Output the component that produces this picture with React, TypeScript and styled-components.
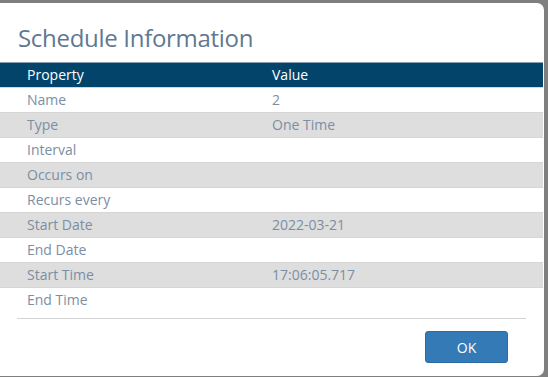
import React from 'react';
import styled, { createGlobalStyle } from 'styled-components';

const GlobalStyle = createGlobalStyle`
  html, body {
    margin: 0;
    padding: 0;
    background: #808080;
    font-family: 'Open Sans', 'Liberation Sans', sans-serif;
  }
`;

const Backdrop = styled.div`
  width: 548px;
  height: 377px;
  background: #7f7f7f;
  padding-top: 3px;
  box-sizing: border-box;
  overflow: hidden;
`;

const Modal = styled.div`
  width: 544px;
  height: 373px;
  background: #fff;
  border-radius: 0 7px 7px 0;
  display: flex;
  flex-direction: column;
`;

const Title = styled.h1`
  margin: 0;
  padding: 18px 0 0 18px;
  height: 59px;
  box-sizing: border-box;
  font-size: 24px;
  font-weight: 400;
  color: #5f7893;
  letter-spacing: -0.3px;
`;

const Table = styled.div`
  display: flex;
  flex-direction: column;
`;

const Row = styled.div<{ $shade?: boolean; $head?: boolean }>`
  display: grid;
  grid-template-columns: 245px 1fr;
  height: 25px;
  box-sizing: border-box;
  align-items: center;
  font-size: 14px;
  padding-left: 27px;
  color: ${(p) => (p.$head ? '#ffffff' : '#7b8ea4')};
  background: ${(p) => (p.$head ? '#03446a' : p.$shade ? '#dedede' : '#ffffff')};
  border-top: 1px solid ${(p) => (p.$head ? '#8aa3b6' : '#d6d6d6')};
  margin-right: 1px;
`;

const Cell = styled.span`
  white-space: nowrap;
  line-height: 22px;
`;

const Footer = styled.div`
  margin: 6px 18px 0 17px;
  border-top: 1px solid #d3d3d3;
  display: flex;
  justify-content: flex-end;
  padding: 12px 18px 0 0;
`;

const OkButton = styled.button`
  width: 83px;
  height: 32px;
  background: #337ab7;
  border: 1px solid #2e6da4;
  border-radius: 3px;
  color: #fff;
  font-family: 'Open Sans', 'Liberation Sans', sans-serif;
  font-size: 14px;
`;

const rows: [string, string][] = [
  ['Name', '2'],
  ['Type', 'One Time'],
  ['Interval', ''],
  ['Occurs on', ''],
  ['Recurs every', ''],
  ['Start Date', '2022-03-21'],
  ['End Date', ''],
  ['Start Time', '17:06:05.717'],
  ['End Time', ''],
];

export default function App() {
  return (
    <>
      <GlobalStyle />
      <Backdrop>
        <Modal>
          <Title>Schedule Information</Title>
          <Table>
            <Row $head>
              <Cell>Property</Cell>
              <Cell>Value</Cell>
            </Row>
            {rows.map(([k, v], i) => (
              <Row key={k} $shade={i % 2 === 1}>
                <Cell>{k}</Cell>
                <Cell>{v}</Cell>
              </Row>
            ))}
          </Table>
          <Footer>
            <OkButton>OK</OkButton>
          </Footer>
        </Modal>
      </Backdrop>
    </>
  );
}
